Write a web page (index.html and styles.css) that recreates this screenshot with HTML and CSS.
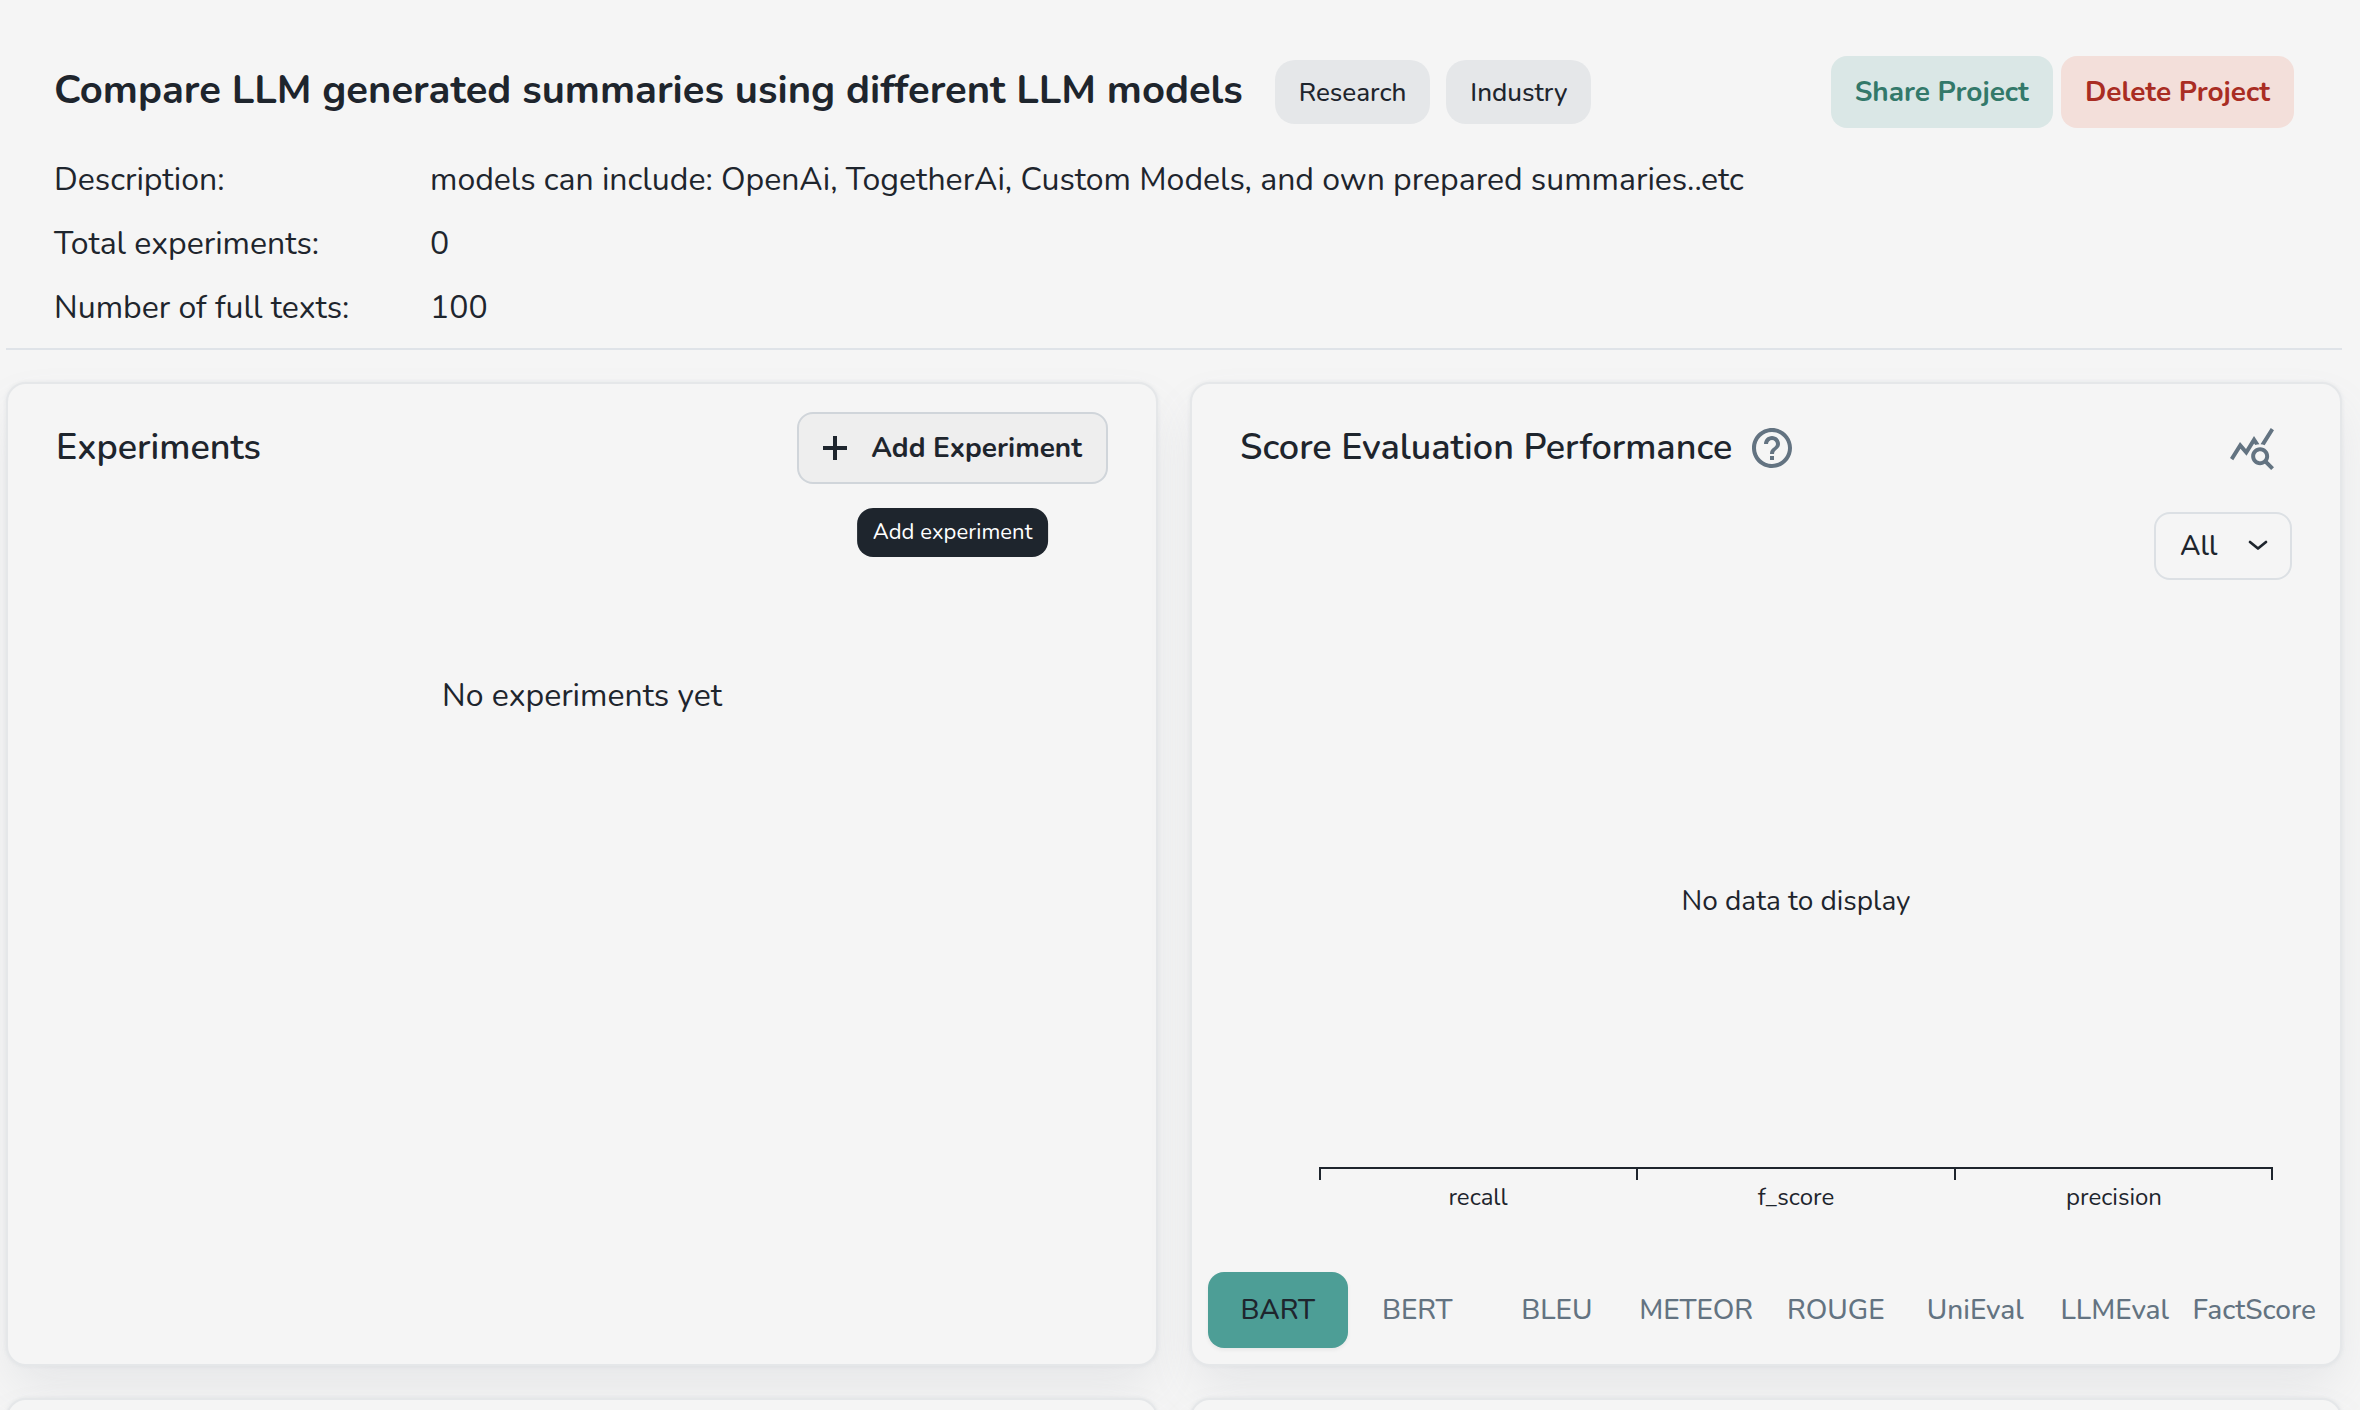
FILE: index.html
```
<!DOCTYPE html>
<html lang="en">
<head>
<meta charset="utf-8">
<title>Project</title>
<link rel="stylesheet" href="styles.css">
</head>
<body>
<main class="page">
  <header class="project">
    <div class="project-head">
      <h1 class="project-title">Compare LLM generated summaries using different LLM models</h1>
      <div class="chips">
        <span class="chip">Research</span>
        <span class="chip">Industry</span>
      </div>
      <div class="actions">
        <button class="btn btn-share">Share Project</button>
        <button class="btn btn-delete">Delete Project</button>
      </div>
    </div>
    <dl class="facts">
      <dt>Description:</dt><dd>models can include: OpenAi, TogetherAi, Custom Models, and own prepared summaries..etc</dd>
      <dt>Total experiments:</dt><dd>0</dd>
      <dt>Number of full texts:</dt><dd>100</dd>
    </dl>
  </header>

  <div class="grid">
    <section class="card">
      <div class="card-head">
        <h2 class="card-title">Experiments</h2>
        <div class="add-wrap">
          <button class="btn btn-add">
            <svg class="icon-plus" viewBox="0 0 24 24"><path d="M12 0v24M0 12h24"/></svg>
            Add Experiment
          </button>
          <span class="tooltip">Add experiment</span>
        </div>
      </div>
      <p class="empty">No experiments yet</p>
    </section>

    <section class="card">
      <div class="card-head">
        <h2 class="card-title">Score Evaluation Performance</h2>
        <svg class="icon icon-help" viewBox="0 0 24 24"><path d="M11 18h2v-2h-2v2zm1-16C6.48 2 2 6.48 2 12s4.48 10 10 10 10-4.480 10-10S17.520 2 12 2zm0 18c-4.410 0-8-3.590-8-8s3.590-8 8-8 8 3.590 8 8-3.590 8-8 8zm0-14c-2.210 0-4 1.790-4 4h2c0-1.100.900-2 2-2s2 .900 2 2c0 2-3 1.750-3 5h2c0-2.250 3-2.500 3-5 0-2.210-1.790-4-4-4z"/></svg>
        <svg class="icon icon-stats" viewBox="0 0 24 24"><path d="m19.88 18.47c.44-.7.7-1.51.7-2.39 0-2.49-2.01-4.5-4.5-4.5s-4.5 2.01-4.5 4.5 2.01 4.5 4.49 4.5c.88 0 1.7-.26 2.39-.7L21.58 23 23 21.58l-3.12-3.11zm-3.8.11c-1.38 0-2.5-1.12-2.5-2.5s1.12-2.5 2.5-2.5 2.5 1.12 2.5 2.5-1.12 2.5-2.5 2.5zm-.36-8.5c-.74.02-1.45.18-2.1.45l-.55-.83-3.8 6.18-3.01-3.52-3.63 5.81L1 17l5-8 3 3.5L13 6l2.72 4.08zm2.59.5c-.64-.28-1.33-.45-2.05-.49L21.38 2 23 3.18l-4.69 7.4z"/></svg>
      </div>
      <div class="filter">
        <button class="select">All
          <svg class="icon-chevron" viewBox="0 0 20 12"><path d="M2 2l8 6.500 8-6.500"/></svg>
        </button>
      </div>
      <div class="chart">
        <p class="chart-empty">No data to display</p>
        <div class="axis">
          <span>recall</span><span>f_score</span><span>precision</span>
        </div>
      </div>
      <nav class="tabs">
        <a class="tab tab-active">BART</a>
        <a class="tab">BERT</a>
        <a class="tab">BLEU</a>
        <a class="tab">METEOR</a>
        <a class="tab">ROUGE</a>
        <a class="tab">UniEval</a>
        <a class="tab">LLMEval</a>
        <a class="tab">FactScore</a>
      </nav>
    </section>

    <section class="card"></section>
    <section class="card"></section>
  </div>
</main>
</body>
</html>
```
FILE: styles.css
```
* { box-sizing: border-box; }

body {
  margin: 0;
  background: #f5f5f5;
  color: #1e252d;
  font-family: Nunito, Lato, sans-serif;
  font-size: 28px;
}

h1, h2, p, dl, dd { margin: 0; }

button {
  margin: 0;
  background: none;
  border: 0;
  color: inherit;
  font: inherit;
}

.page {
  height: 100vh;
  padding: 56px 18px 0 6px;
  overflow: hidden;
}

.project {
  height: 294px;
  padding: 0 48px;
  border-bottom: 2px solid #dfe3e8;
}

.project-head {
  display: flex;
  align-items: center;
  height: 72px;
}

.project-title {
  padding-bottom: 4px;
  font-size: 40px;
  font-weight: 700;
  line-height: 68px;
  white-space: nowrap;
}

.chips {
  display: flex;
  gap: 16px;
  margin-left: 32px;
}

.chip {
  height: 64px;
  padding: 0 24px;
  border-radius: 20px;
  background: #e5e7e9;
  font-size: 26px;
  font-weight: 500;
  line-height: 66px;
}

.actions {
  display: flex;
  gap: 8px;
  margin-left: auto;
}

.btn {
  height: 72px;
  padding: 0 24px;
  border-radius: 16px;
  font-weight: 700;
  white-space: nowrap;
}

.btn-share { background: #dae7e6; color: #33796a; }
.btn-delete { background: #f3dfda; color: #a92d23; }

.facts {
  display: grid;
  grid-template-columns: 376px 1fr;
  padding-top: 20px;
  font-size: 32px;
  line-height: 64px;
}

.grid {
  display: grid;
  grid-template-columns: 1fr 1fr;
  grid-template-rows: 984px 984px;
  gap: 32px;
  padding-top: 32px;
}

.card {
  display: flex;
  flex-direction: column;
  min-width: 0;
  border: 2px solid #e5e7e9;
  border-radius: 20px;
  background: #f5f5f5;
  box-shadow: 0 0 4px rgba(145, 158, 171, .14), 0 24px 48px -8px rgba(140, 148, 162, .17);
}

.card-head {
  display: flex;
  align-items: center;
  height: 72px;
  margin: 28px 48px 0;
}

.card-title {
  font-size: 36px;
  font-weight: 600;
  line-height: 72px;
}

.add-wrap {
  position: relative;
  margin-left: auto;
}

.btn-add {
  display: flex;
  align-items: center;
  gap: 24px;
  border: 2px solid #d0d5da;
  background: #eeeeee;
}

.icon-plus {
  width: 24px;
  height: 24px;
  fill: none;
  stroke: #1e252d;
  stroke-width: 4;
}

.tooltip {
  position: absolute;
  top: 96px;
  left: 50%;
  height: 49px;
  padding: 0 16px;
  border-radius: 16px;
  background: #1e252d;
  color: #fff;
  font-size: 22px;
  letter-spacing: .08px;
  line-height: 48px;
  white-space: nowrap;
  transform: translateX(-50%);
}

.empty {
  margin-top: 180px;
  font-size: 32px;
  line-height: 64px;
  text-align: center;
}

.icon {
  width: 48px;
  height: 48px;
  fill: #637381;
}

.icon-help { margin-left: 16px; }
.icon-stats { margin: 0 16px 0 auto; }

.filter {
  display: flex;
  justify-content: flex-end;
  padding: 28px 48px 0;
}

.select {
  display: flex;
  align-items: center;
  justify-content: space-between;
  width: 138px;
  height: 68px;
  padding: 0 22px 0 24px;
  border: 2px solid #dce0e4;
  border-radius: 16px;
  font-weight: 500;
}

.icon-chevron {
  width: 20px;
  height: 12px;
  fill: none;
  stroke: #1e252d;
  stroke-width: 2.7;
  stroke-linecap: round;
  stroke-linejoin: round;
}

.chart {
  display: flex;
  flex-direction: column;
  justify-content: space-between;
  height: 642px;
  padding: 289px 67px 0 127px;
}

.chart-empty {
  line-height: 64px;
  text-align: center;
}

.axis {
  display: grid;
  grid-template-columns: repeat(3, 1fr);
  height: 55px;
  font-size: 24px;
  text-align: center;
  background:
    linear-gradient(#1e252d, #1e252d) 0 0 / 100% 2px no-repeat,
    linear-gradient(#1e252d, #1e252d) 0 0 / 2px 13px no-repeat,
    linear-gradient(#1e252d, #1e252d) 33.333% 0 / 2px 13px no-repeat,
    linear-gradient(#1e252d, #1e252d) 66.667% 0 / 2px 13px no-repeat,
    linear-gradient(#1e252d, #1e252d) 100% 0 / 2px 13px no-repeat;
}

.axis span {
  padding-top: 14px;
  line-height: 32px;
}

.tabs {
  display: grid;
  grid-template-columns: repeat(8, 1fr);
  height: 76px;
  margin: 50px 16px 0;
}

.tab {
  border-radius: 16px;
  color: #637381;
  font-weight: 500;
  line-height: 76px;
  text-align: center;
}

.tab-active {
  background: #4d9e96;
  color: #1e252d;
  box-shadow: 0 2px 4px rgba(0, 0, 0, .06);
}
```
